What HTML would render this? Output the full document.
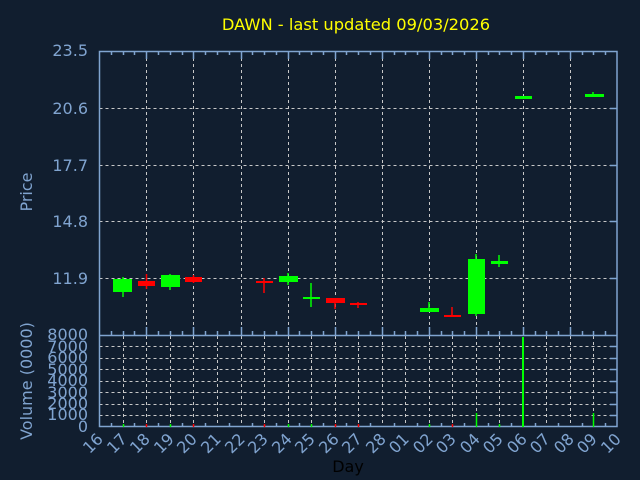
<!DOCTYPE html>
<html><head><style>
html,body{margin:0;padding:0;background:#111e2f;}
svg{display:block;font-family:"DejaVu Sans","Liberation Sans",sans-serif;}
</style></head><body>
<svg width="640" height="480" viewBox="0 0 640 480" xmlns="http://www.w3.org/2000/svg">
<rect width="640" height="480" fill="#111e2f"/>
<text x="356" y="30" fill="#ffff00" font-size="16.3" text-anchor="middle">DAWN - last updated 09/03/2026</text>
<g fill="#80a4d0" font-size="16" text-anchor="end">
<text x="88" y="56">23.5</text>
<text x="88" y="114">20.6</text>
<text x="88" y="171">17.7</text>
<text x="88" y="227">14.8</text>
<text x="88" y="284">11.9</text>
</g>
<g fill="#80a4d0" font-size="16" text-anchor="end">
<text x="88" y="340">8000</text><text x="88" y="352">7000</text><text x="88" y="363">6000</text><text x="88" y="375">5000</text><text x="88" y="386">4000</text><text x="88" y="398">3000</text><text x="88" y="409">2000</text><text x="88" y="420">1000</text><text x="88" y="432">0</text>
</g>
<text transform="translate(32,192) rotate(-90)" fill="#80a4d0" font-size="16" text-anchor="middle">Price</text>
<text transform="translate(32,381) rotate(-90)" fill="#80a4d0" font-size="16" text-anchor="middle">Volume (0000)</text>
<text x="348" y="472" fill="#000" font-size="16" text-anchor="middle">Day</text>
<g stroke="#c8c8c8" stroke-width="1" stroke-dasharray="3,3">
<path d="M99.5 108.5H617M99.5 165.5H617M99.5 221.5H617M99.5 278.5H617"/>
<path d="M146.5 52V335M193.5 52V335M241.5 52V335M288.5 52V335M335.5 52V335M382.5 52V335M429.5 52V335M476.5 52V335M523.5 52V335M570.5 52V335"/>
<path d="M99.5 346.5H617M99.5 358.5H617M99.5 369.5H617M99.5 381.5H617M99.5 392.5H617M99.5 404.5H617M99.5 415.5H617"/>
<path d="M123.5 336V427M146.5 336V427M170.5 336V427M193.5 336V427M217.5 336V427M241.5 336V427M264.5 336V427M288.5 336V427M311.5 336V427M335.5 336V427M358.5 336V427M382.5 336V427M405.5 336V427M429.5 336V427M452.5 336V427M476.5 336V427M499.5 336V427M546.5 336V427M570.5 336V427M593.5 336V427"/>
</g>
<g stroke="#80a4d0" stroke-width="1.5" fill="none">
<rect x="99.5" y="51.5" width="517.5" height="375"/>
<path d="M99.5 335.5H617"/>
<path d="M146.5 335V327M193.5 335V327M241.5 335V327M288.5 335V327M335.5 335V327M382.5 335V327M429.5 335V327M476.5 335V327M523.5 335V327M570.5 335V327"/>
<path d="M146.5 52V59M193.5 52V59M241.5 52V59M288.5 52V59M335.5 52V59M382.5 52V59M429.5 52V59M476.5 52V59M523.5 52V59M570.5 52V59"/>
<path d="M111.5 335V331M123.5 335V331M134.5 335V331M158.5 335V331M170.5 335V331M182.5 335V331M205.5 335V331M217.5 335V331M229.5 335V331M252.5 335V331M264.5 335V331M276.5 335V331M299.5 335V331M311.5 335V331M323.5 335V331M346.5 335V331M358.5 335V331M370.5 335V331M394.5 335V331M405.5 335V331M417.5 335V331M441.5 335V331M452.5 335V331M464.5 335V331M488.5 335V331M499.5 335V331M511.5 335V331M535.5 335V331M546.5 335V331M558.5 335V331M582.5 335V331M593.5 335V331M605.5 335V331"/>
<path d="M111.5 52V55M123.5 52V55M134.5 52V55M158.5 52V55M170.5 52V55M182.5 52V55M205.5 52V55M217.5 52V55M229.5 52V55M252.5 52V55M264.5 52V55M276.5 52V55M299.5 52V55M311.5 52V55M323.5 52V55M346.5 52V55M358.5 52V55M370.5 52V55M394.5 52V55M405.5 52V55M417.5 52V55M441.5 52V55M452.5 52V55M464.5 52V55M488.5 52V55M499.5 52V55M511.5 52V55M535.5 52V55M546.5 52V55M558.5 52V55M582.5 52V55M593.5 52V55M605.5 52V55"/>
<path d="M617 108.5H610M617 165.5H610M617 221.5H610M617 278.5H610"/>
<path d="M617 346.5H610M617 358.5H610M617 369.5H610M617 381.5H610M617 392.5H610M617 404.5H610M617 415.5H610"/>
<path d="M111.5 426V423M134.5 426V423M158.5 426V423M182.5 426V423M205.5 426V423M229.5 426V423M252.5 426V423M276.5 426V423M299.5 426V423M323.5 426V423M346.5 426V423M370.5 426V423M394.5 426V423M417.5 426V423M441.5 426V423M464.5 426V423M488.5 426V423M511.5 426V423M535.5 426V423M558.5 426V423M582.5 426V423M605.5 426V423"/>
</g>
<g stroke-width="1.5">
<path stroke="#00ff00" d="M123 277V297"/><rect x="113" y="279" width="19" height="13" fill="#00ff00"/>
<path stroke="#ff0000" d="M146.5 274V289"/><rect x="138" y="281" width="17" height="5" fill="#ff0000"/>
<path stroke="#00ff00" d="M170 274V290"/><rect x="161" y="275" width="19" height="12" fill="#00ff00"/>
<path stroke="#ff0000" d="M193.5 275V283"/><rect x="185" y="277" width="17" height="5" fill="#ff0000"/>
<path stroke="#ff0000" d="M264 278V293"/><rect x="256" y="281" width="17" height="2" fill="#ff0000"/>
<path stroke="#00ff00" d="M288 273V285"/><rect x="279" y="276" width="19" height="6" fill="#00ff00"/>
<path stroke="#00ff00" d="M311 283V307"/><rect x="303" y="297" width="17" height="2" fill="#00ff00"/>
<path stroke="#ff0000" d="M335 298V309"/><rect x="326" y="298" width="19" height="5" fill="#ff0000"/>
<path stroke="#ff0000" d="M358 302V308"/><rect x="350" y="303" width="17" height="2" fill="#ff0000"/>
<path stroke="#00ff00" d="M429 302V312"/><rect x="420" y="308" width="19" height="4" fill="#00ff00"/>
<path stroke="#ff0000" d="M452 307V317"/><rect x="444" y="315" width="17" height="2" fill="#ff0000"/>
<path stroke="#00ff00" d="M476 254V316"/><rect x="468" y="259" width="17" height="55" fill="#00ff00"/>
<path stroke="#00ff00" d="M499 255V267"/><rect x="491" y="261" width="17" height="3" fill="#00ff00"/>
<rect x="515" y="96" width="17" height="3" fill="#00ff00"/>
<path stroke="#00ff00" d="M593 92V96"/><rect x="585" y="94" width="19" height="3" fill="#00ff00"/>
<path stroke="#00ff00" d="M476.5 413V427M593.5 413V427M123.5 424V427M170.5 424V427M288.5 424V427M311.5 424V427M429.5 424V427M499.5 424V427"/>
<rect x="522" y="337" width="2" height="90" fill="#00ff00"/>
<path stroke="#ff0000" d="M146.5 424V427M193.5 424V427M264.5 424V427M335.5 424V427M358.5 424V427M452.5 424V427"/>
</g>
<g fill="#80a4d0" font-size="16">
<text transform="translate(104,440) rotate(-45)" text-anchor="end">16</text>
<text transform="translate(128,440) rotate(-45)" text-anchor="end">17</text>
<text transform="translate(151,440) rotate(-45)" text-anchor="end">18</text>
<text transform="translate(175,440) rotate(-45)" text-anchor="end">19</text>
<text transform="translate(198,440) rotate(-45)" text-anchor="end">20</text>
<text transform="translate(222,440) rotate(-45)" text-anchor="end">21</text>
<text transform="translate(246,440) rotate(-45)" text-anchor="end">22</text>
<text transform="translate(269,440) rotate(-45)" text-anchor="end">23</text>
<text transform="translate(293,440) rotate(-45)" text-anchor="end">24</text>
<text transform="translate(316,440) rotate(-45)" text-anchor="end">25</text>
<text transform="translate(340,440) rotate(-45)" text-anchor="end">26</text>
<text transform="translate(363,440) rotate(-45)" text-anchor="end">27</text>
<text transform="translate(387,440) rotate(-45)" text-anchor="end">28</text>
<text transform="translate(410,440) rotate(-45)" text-anchor="end">01</text>
<text transform="translate(434,440) rotate(-45)" text-anchor="end">02</text>
<text transform="translate(457,440) rotate(-45)" text-anchor="end">03</text>
<text transform="translate(481,440) rotate(-45)" text-anchor="end">04</text>
<text transform="translate(504,440) rotate(-45)" text-anchor="end">05</text>
<text transform="translate(528,440) rotate(-45)" text-anchor="end">06</text>
<text transform="translate(551,440) rotate(-45)" text-anchor="end">07</text>
<text transform="translate(575,440) rotate(-45)" text-anchor="end">08</text>
<text transform="translate(598,440) rotate(-45)" text-anchor="end">09</text>
<text transform="translate(622,440) rotate(-45)" text-anchor="end">10</text>
</g>
</svg>
</body></html>
